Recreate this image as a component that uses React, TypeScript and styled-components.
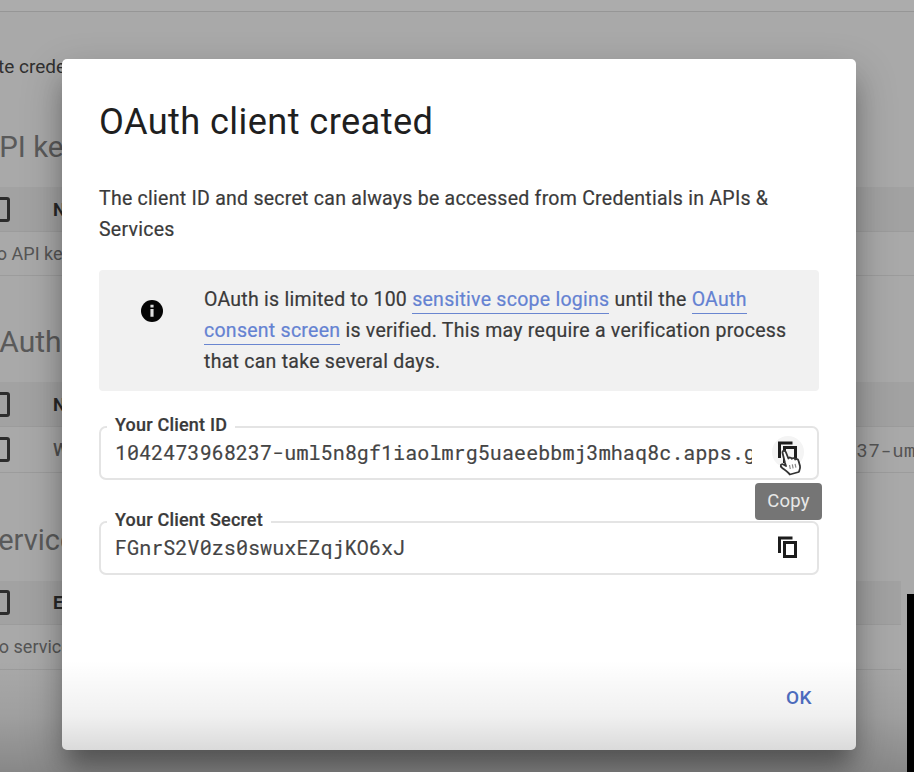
import React from "react";
import styled, { createGlobalStyle } from "styled-components";

const GlobalStyle = createGlobalStyle`
  * { box-sizing: border-box; }
  body { margin: 0; background: #a9a9a9; font-family: Roboto, sans-serif; overflow: hidden; }
`;

const Screen = styled.div`
  position: relative;
  width: 914px;
  height: 772px;
  overflow: hidden;
`;

const Page = styled.main`
  height: 772px;
  display: flex;
  flex-direction: column;
  background: #a9a9a9;
`;

const TopBar = styled.div`
  height: 12px;
  flex: none;
  background: #acacac;
  border-bottom: 1px solid #969696;
`;

const Line = styled.div<{ $h: number; $size: number; $shift: number; $color: string; $weight?: number }>`
  flex: none;
  height: ${(p) => p.$h}px;
  line-height: ${(p) => p.$h}px;
  font-size: ${(p) => p.$size}px;
  font-weight: ${(p) => p.$weight ?? 400};
  color: ${(p) => p.$color};
  margin-left: ${(p) => p.$shift}px;
  white-space: nowrap;
`;

const Gap = styled.div<{ $h: number }>`
  flex: none;
  height: ${(p) => p.$h}px;
`;

const Row = styled.div<{ $h: number; $head?: boolean }>`
  flex: none;
  display: flex;
  align-items: center;
  height: ${(p) => p.$h}px;
  margin-right: 13px;
  background: ${(p) => (p.$head ? "#a2a2a2" : "transparent")};
  border-bottom: 1px solid #9c9c9c;
  font-size: 18px;
  color: #444;
  white-space: nowrap;
`;

const WideRow = styled(Row)`
  margin-right: 0;
`;

const Check = styled.span`
  width: 25px;
  height: 25px;
  margin-left: -15px;
  border: 3px solid #2c2c2c;
  border-radius: 3px;
  flex: none;
`;

const Cell = styled.span<{ $bold?: boolean }>`
  margin-left: 43px;
  width: 60px;
  flex: none;
  overflow: hidden;
  font-weight: ${(p) => (p.$bold ? 700 : 500)};
  color: ${(p) => (p.$bold ? "#282828" : "#505050")};
`;

const IdCell = styled.span`
  margin-left: 614px;
  font: 19px "Roboto Mono", "DejaVu Sans Mono", monospace;
  letter-spacing: 0.4px;
  color: #555;
`;

const Camera = styled.div`
  position: absolute;
  right: 0;
  bottom: 0;
  width: 7px;
  height: 178px;
  background: #000;
`;

const Shade = styled.div`
  position: absolute;
  inset: auto 0 0 0;
  height: 112px;
  pointer-events: none;
  background: linear-gradient(rgba(0, 0, 0, 0), rgba(0, 0, 0, 0.06) 50%, rgba(0, 0, 0, 0.2));
`;

const Dialog = styled.section`
  position: absolute;
  left: 62px;
  top: 59px;
  width: 794px;
  height: 691px;
  padding: 39px 37px 0 37px;
  display: flex;
  flex-direction: column;
  background: #fff;
  border-radius: 5px;
  box-shadow: 0 20px 22px -6px rgba(0, 0, 0, 0.28), 0 16px 40px 2px rgba(0, 0, 0, 0.24);
  color: #3a3a3a;
`;

const Title = styled.h1`
  margin: 0;
  height: 48px;
  line-height: 48px;
  font-size: 36.2px;
  font-weight: 400;
  letter-spacing: 0.4px;
  color: #1f1f1f;
`;

const Text = styled.p`
  margin: 0;
  font-size: 19.5px;
  line-height: 31px;
  letter-spacing: 0.26px;
  white-space: nowrap;
  -webkit-text-stroke: 0.2px currentColor;
`;

const Intro = styled(Text)`
  margin-top: 37px;
`;

const Notice = styled.div`
  margin-top: 25px;
  height: 121px;
  padding: 14px 0 0 42px;
  display: flex;
  gap: 41px;
  background: #f1f1f1;
  border-radius: 4px;
  svg { margin-top: 16px; flex: none; }
`;

const Link = styled.a`
  color: #6482d2;
  border-bottom: 1.5px solid #6a86d0;
  padding-bottom: 2px;
`;

const Field = styled.div<{ $top: number; $h: number }>`
  position: relative;
  margin-top: ${(p) => p.$top}px;
  height: ${(p) => p.$h}px;
  padding: 0 16px 3px 16px;
  border: 2px solid #e4e4e4;
  border-radius: 7px;
  display: flex;
  align-items: center;
  justify-content: space-between;
`;

const Label = styled.label`
  position: absolute;
  left: 6px;
  top: -14px;
  padding: 0 8px;
  line-height: 21px;
  font-size: 18px;
  font-weight: 500;
  letter-spacing: 0.2px;
  background: #fff;
  white-space: nowrap;
  -webkit-text-stroke: 0.2px currentColor;
`;

const Value = styled.div`
  width: 637px;
  margin-left: -2px;
  overflow: hidden;
  white-space: nowrap;
  font: 20px/26px "Roboto Mono", "DejaVu Sans Mono", monospace;
  letter-spacing: 0.09px;
  color: #444;
  -webkit-text-stroke: 0.2px currentColor;
`;

const CopyButton = styled.button<{ $hover?: boolean }>`
  border: 0;
  padding: 0;
  width: 32px;
  height: 32px;
  margin-right: -3px;
  border-radius: 50%;
  display: grid;
  place-items: center;
  background: ${(p) => (p.$hover ? "#f4f4f4" : "transparent")};
`;

const Pointer = styled.svg`
  position: absolute;
  left: 716px;
  top: 390px;
`;

const Tooltip = styled.div`
  position: absolute;
  left: 693px;
  top: 424px;
  width: 67px;
  height: 37px;
  border-radius: 4px;
  background: #757575;
  color: #e8e8e8;
  font-size: 18.5px;
  line-height: 36px;
  letter-spacing: 0.2px;
  text-align: center;
`;

const Actions = styled.div`
  display: flex;
  justify-content: flex-end;
  margin-top: 107px;
  padding-right: 7px;
`;

const OkButton = styled.button`
  border: 0;
  padding: 0;
  background: none;
  font: 500 19px/32px Roboto, sans-serif;
  letter-spacing: 0.4px;
  color: #4f6fc4;
`;

const CopyIcon = () => (
  <svg width="22" height="24" viewBox="0 0 22 24" fill="none" stroke="#1c1c1c" strokeWidth="3">
    <path d="M2.500 18V3H15.500" />
    <rect x="7.500" y="7.500" width="11" height="14" />
  </svg>
);

export default function App() {
  return (
    <>
      <GlobalStyle />
      <Screen>
        <Page>
          <TopBar />
          <Gap $h={40} />
          <Line $h={30} $size={19} $shift={-41} $color="#303030">
            Create credentials to access your enabled APIs
          </Line>
          <Gap $h={45} />
          <Line $h={40} $size={29.5} $shift={-20} $color="#5a5a5a">API keys</Line>
          <Gap $h={20} />
          <WideRow $h={45} $head><Check /><Cell $bold>Name</Cell></WideRow>
          <WideRow $h={44}><Line $h={44} $size={18} $shift={-16} $color="#555">No API keys to display</Line></WideRow>
          <Gap $h={46} />
          <Line $h={40} $size={30} $shift={-21} $color="#5a5a5a">OAuth 2.0 Client IDs</Line>
          <Gap $h={20} />
          <WideRow $h={45} $head><Check /><Cell $bold>Name</Cell></WideRow>
          <WideRow $h={46}>
            <Check /><Cell>Web client 1</Cell><IdCell>1042473968237-uml5</IdCell>
          </WideRow>
          <Gap $h={47} />
          <Line $h={40} $size={29} $shift={-19} $color="#5a5a5a">Service Accounts</Line>
          <Gap $h={21} />
          <Row $h={44} $head><Check /><Cell $bold>Email</Cell></Row>
          <Row $h={45}><Line $h={44} $size={18} $shift={-14} $color="#555">No service accounts to display</Line></Row>
        </Page>

        <Dialog role="dialog">
          <Title>OAuth client created</Title>
          <Intro>
            The client ID and secret can always be accessed from Credentials in APIs &amp;
            <br />
            Services
          </Intro>
          <Notice>
            <svg width="22" height="22" viewBox="0 0 21 21">
              <circle cx="10.5" cy="10.5" r="10.5" fill="#050505" />
              <path d="M10.5 4.6v2.6M10.5 8.600v7.400" stroke="#ddd" strokeWidth="3" />
            </svg>
            <Text>
              OAuth is limited to 100 <Link>sensitive scope logins</Link> until the <Link>OAuth</Link>
              <br />
              <Link>consent screen</Link> is verified. This may require a verification process
              <br />
              that can take several days.
            </Text>
          </Notice>
          <Field $top={35} $h={54}>
            <Label>Your Client ID</Label>
            <Value>1042473968237-uml5n8gf1iaolmrg5uaeebbmj3mhaq8c.apps.g</Value>
            <CopyButton $hover aria-label="Copy client ID"><CopyIcon /></CopyButton>
          </Field>
          <Field $top={41} $h={54}>
            <Label>Your Client Secret</Label>
            <Value>FGnrS2V0zs0swuxEZqjKO6xJ</Value>
            <CopyButton aria-label="Copy client secret"><CopyIcon /></CopyButton>
          </Field>
          <Actions>
            <OkButton>OK</OkButton>
          </Actions>
          <Pointer width="25" height="27" viewBox="0 0 25 27">
            <path
              d="M7 14 4.5 3.8C4 1.6 7 1 7.8 3l2.6 6.500c.5-1.500 3-1.200 3.400.3.8-1.200 3-.9 3.400.7 1-1 3-.3 3.300 1.200L22 17c.6 2.400-.5 4.200-1.200 6l-9 2.500c-1.600-2.700-4.500-4.400-7.500-6.500-3-2.300-1.200-4.600 1-3.500L8 17z"
              fill="#fff"
              stroke="#333"
              strokeWidth="1.8"
              strokeLinejoin="round"
            />
            <path d="m11.500 16 .8 4m2-4.600.8 4m2-4.500.8 3.800" stroke="#888" strokeWidth="1.2" />
          </Pointer>
          <Tooltip>Copy</Tooltip>
        </Dialog>
        <Shade />
        <Camera />
      </Screen>
    </>
  );
}
